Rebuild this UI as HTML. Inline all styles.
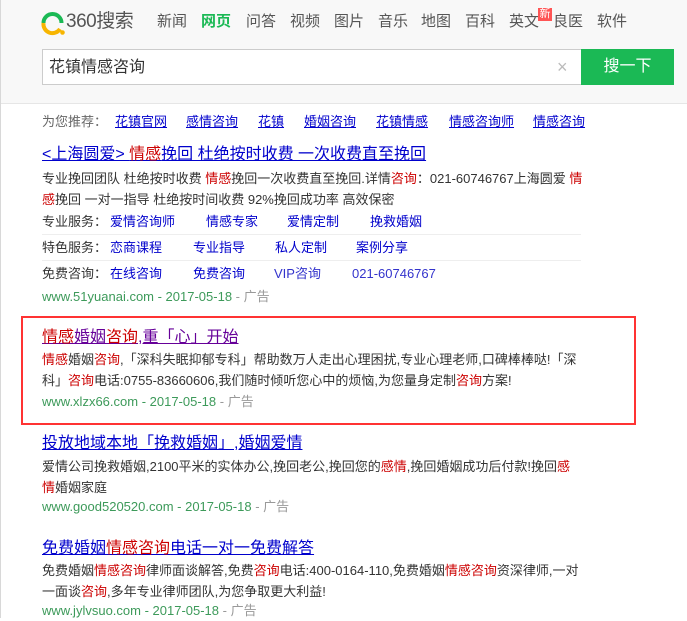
<!DOCTYPE html>
<html><head><meta charset="utf-8"><style>
*{margin:0;padding:0;box-sizing:border-box}
body{width:687px;height:618px;overflow:hidden;background:#fff;font-family:"Liberation Sans","Noto Sans CJK SC",sans-serif;position:relative;color:#333;font-size:13px}
.hdr{position:absolute;left:0;top:0;width:687px;height:104px;background:#f8f8f8;border-bottom:1px solid #e6e6e6}
.lb{position:absolute;left:0;top:0;width:1px;height:618px;background:#d8d8d8}
.a{position:absolute;white-space:nowrap}
.nav{font-size:15px;color:#555;top:12px;line-height:20px}
.t{font-size:16px;line-height:20px;color:#00c;text-decoration:underline}
.b{font-size:13px;line-height:20px;color:#333}
.r{color:#c00}
.u{font-size:13px;line-height:20px;color:#3d9a5a}
.u span{color:#999}
.l{color:#00c}
.sep{position:absolute;left:42px;width:539px;height:1px;background:#eee}
</style></head><body>
<div class="hdr"></div>
<div class="lb"></div>
<svg class="a" style="left:40px;top:10px" width="26" height="26" viewBox="0 0 26 26">
<path d="M3.5 13 A9 9 0 0 1 21.5 13" fill="none" stroke="#1bb955" stroke-width="4"/>
<path d="M3.5 13 A9 9 0 0 0 20 19" fill="none" stroke="#f7b500" stroke-width="4"/>
<circle cx="22.5" cy="22.5" r="2.3" fill="#f7b500"/>
</svg>
<div class="a" style="left:66px;top:11px;font-size:19px;color:#555;line-height:22px;letter-spacing:-0.5px">360搜索</div>
<div class="a nav" style="left:157px">新闻</div>
<div class="a nav" style="left:201px;color:#1bb955;font-weight:bold">网页</div>
<div class="a nav" style="left:246px">问答</div>
<div class="a nav" style="left:290px">视频</div>
<div class="a nav" style="left:334px">图片</div>
<div class="a nav" style="left:378px">音乐</div>
<div class="a nav" style="left:421px">地图</div>
<div class="a nav" style="left:465px">百科</div>
<div class="a nav" style="left:509px">英文</div>
<div class="a" style="left:538px;top:8px;width:14px;height:13px;background:#f55;color:#fff;font-size:11px;line-height:13px;text-align:center">新</div>
<div class="a nav" style="left:553px">良医</div>
<div class="a nav" style="left:597px">软件</div>
<div class="a" style="left:42px;top:49px;width:539px;height:36px;background:#fff;border:1px solid #ccc;border-right:none"></div>
<div class="a" style="left:49px;top:58px;font-size:16px;line-height:20px;color:#333">花镇情感咨询</div>
<div class="a" style="left:557px;top:57px;font-size:18px;color:#bbb;line-height:20px">×</div>
<div class="a" style="left:581px;top:49px;width:93px;height:36px;background:#1bb955;color:#fff;font-size:16px;line-height:36px;text-align:center">搜一下</div>

<div class="a b" style="left:42px;top:112px;color:#666">为您推荐：</div>
<div class="a b l" style="left:115px;top:112px;text-decoration:underline">花镇官网</div>
<div class="a b l" style="left:186px;top:112px;text-decoration:underline">感情咨询</div>
<div class="a b l" style="left:258px;top:112px;text-decoration:underline">花镇</div>
<div class="a b l" style="left:304px;top:112px;text-decoration:underline">婚姻咨询</div>
<div class="a b l" style="left:376px;top:112px;text-decoration:underline">花镇情感</div>
<div class="a b l" style="left:449px;top:112px;text-decoration:underline">情感咨询师</div>
<div class="a b l" style="left:533px;top:112px;text-decoration:underline">情感咨询</div>

<div class="a t" style="left:42px;top:145px">&lt;上海圆爱&gt; <span class="r">情感</span>挽回 杜绝按时收费 一次收费直至挽回</div>
<div class="a b" style="left:42px;top:169px">专业挽回团队 杜绝按时收费 <span class="r">情感</span>挽回一次收费直至挽回.详情<span class="r">咨询</span>：021-60746767上海圆爱 <span class="r">情</span></div>
<div class="a b" style="left:42px;top:190px"><span class="r">感</span>挽回 一对一指导 杜绝按时间收费 92%挽回成功率 高效保密</div>
<div class="a b" style="left:42px;top:212px">专业服务：</div>
<div class="a b l" style="left:110px;top:212px">爱情咨询师</div>
<div class="a b l" style="left:206px;top:212px">情感专家</div>
<div class="a b l" style="left:287px;top:212px">爱情定制</div>
<div class="a b l" style="left:370px;top:212px">挽救婚姻</div>
<div class="sep" style="top:234px"></div>
<div class="a b" style="left:42px;top:238px">特色服务：</div>
<div class="a b l" style="left:110px;top:238px">恋商课程</div>
<div class="a b l" style="left:193px;top:238px">专业指导</div>
<div class="a b l" style="left:275px;top:238px">私人定制</div>
<div class="a b l" style="left:356px;top:238px">案例分享</div>
<div class="sep" style="top:260px"></div>
<div class="a b" style="left:42px;top:264px">免费咨询：</div>
<div class="a b l" style="left:110px;top:264px">在线咨询</div>
<div class="a b l" style="left:193px;top:264px">免费咨询</div>
<div class="a b l" style="left:274px;top:264px;color:#33c">VIP咨询</div>
<div class="a b l" style="left:352px;top:264px;color:#33c">021-60746767</div>
<div class="a u" style="left:42px;top:287px">www.51yuanai.com - 2017-05-18 <span>- 广告</span></div>

<div class="a" style="left:21px;top:316px;width:615px;height:109px;border:2px solid #f33"></div>
<div class="a t" style="left:42px;top:328px;color:#609"><span class="r">情感</span>婚姻<span class="r">咨询</span>,重「心」开始</div>
<div class="a b" style="left:42px;top:350px"><span class="r">情感</span>婚姻<span class="r">咨询</span>,「深科失眠抑郁专科」帮助数万人走出心理困扰,专业心理老师,口碑棒棒哒!「深</div>
<div class="a b" style="left:42px;top:371px">科」<span class="r">咨询</span>电话:0755-83660606,我们随时倾听您心中的烦恼,为您量身定制<span class="r">咨询</span>方案!</div>
<div class="a u" style="left:42px;top:392px">www.xlzx66.com - 2017-05-18 <span>- 广告</span></div>

<div class="a t" style="left:42px;top:434px">投放地域本地「挽救婚姻」,婚姻爱情</div>
<div class="a b" style="left:42px;top:457px">爱情公司挽救婚姻,2100平米的实体办公,挽回老公,挽回您的<span class="r">感情</span>,挽回婚姻成功后付款!挽回<span class="r">感</span></div>
<div class="a b" style="left:42px;top:478px"><span class="r">情</span>婚姻家庭</div>
<div class="a u" style="left:42px;top:497px">www.good520520.com - 2017-05-18 <span>- 广告</span></div>

<div class="a t" style="left:42px;top:539px">免费婚姻<span class="r">情感咨询</span>电话一对一免费解答</div>
<div class="a b" style="left:42px;top:561px">免费婚姻<span class="r">情感咨询</span>律师面谈解答,免费<span class="r">咨询</span>电话:400-0164-110,免费婚姻<span class="r">情感咨询</span>资深律师,一对</div>
<div class="a b" style="left:42px;top:582px">一面谈<span class="r">咨询</span>,多年专业律师团队,为您争取更大利益!</div>
<div class="a u" style="left:42px;top:601px">www.jylvsuo.com - 2017-05-18 <span>- 广告</span></div>
</body></html>
